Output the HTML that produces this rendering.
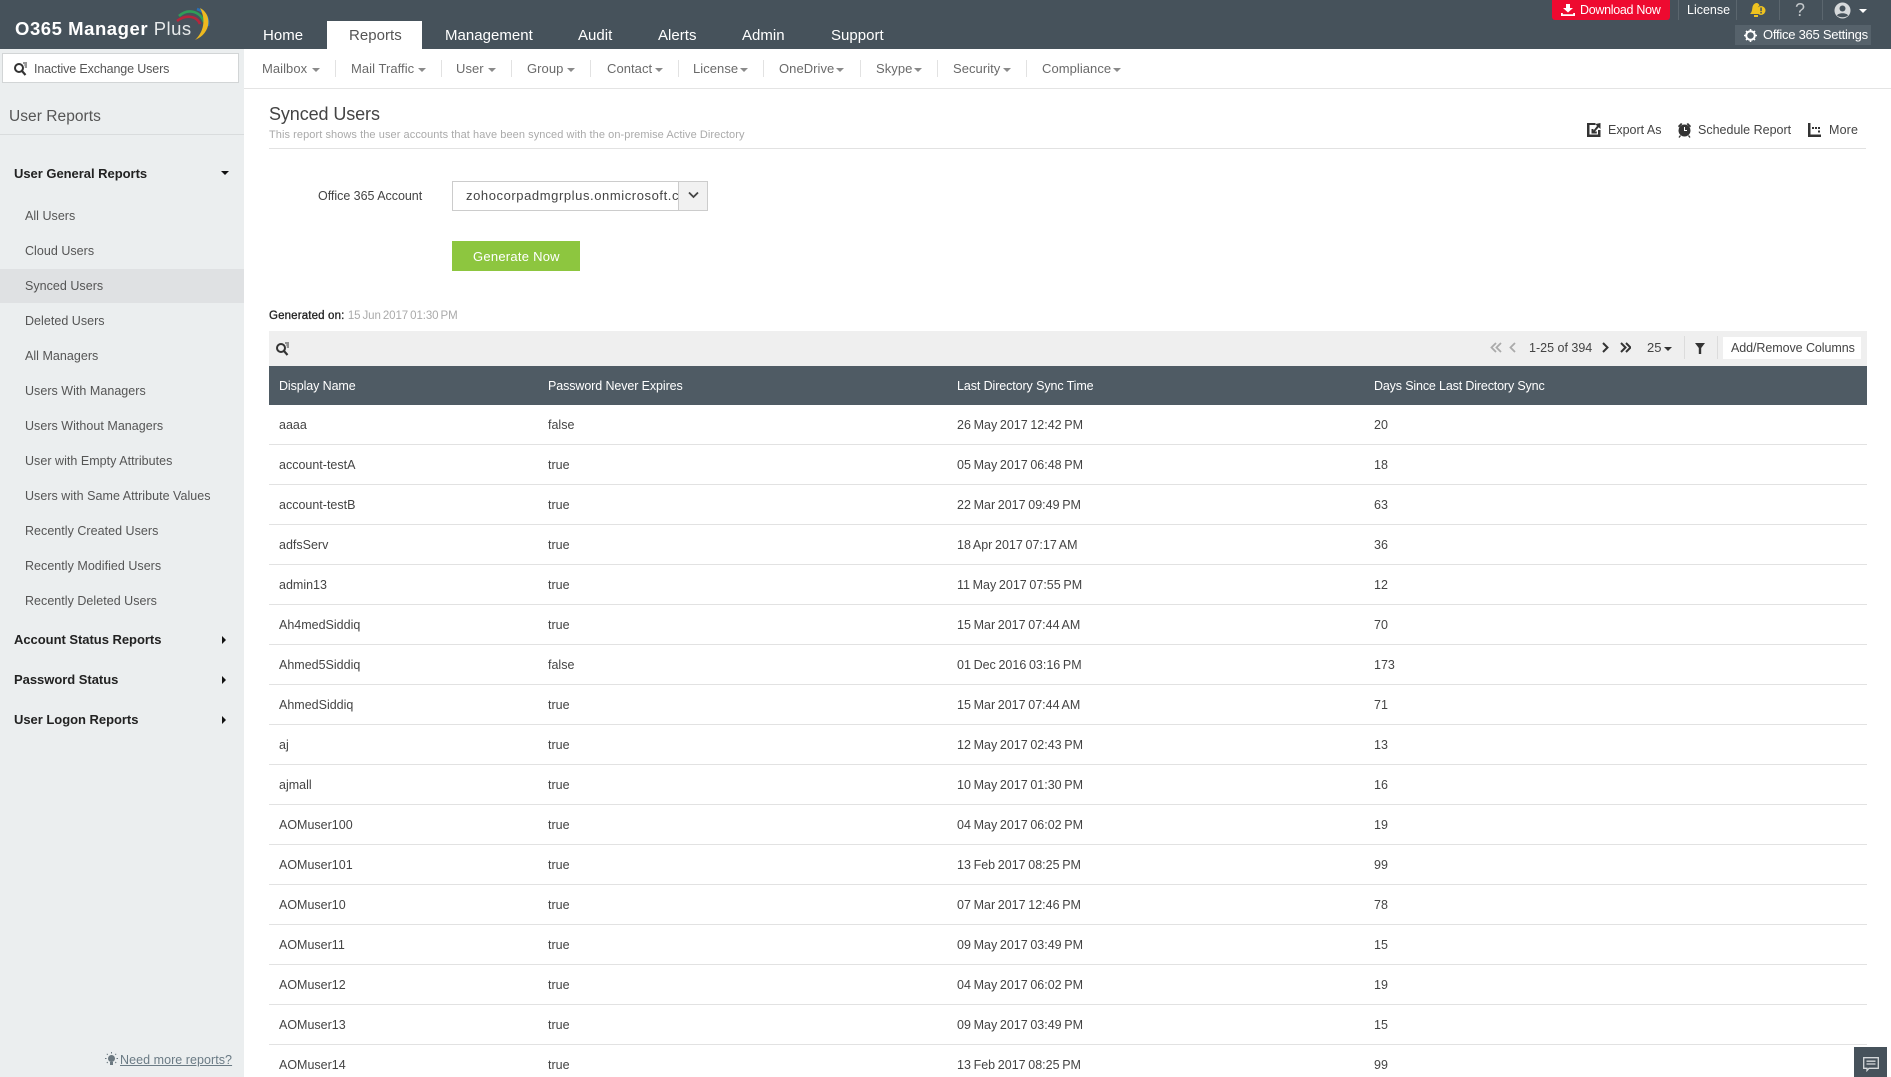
<!DOCTYPE html>
<html><head><meta charset="utf-8"><title>Synced Users</title>
<style>
html,body{margin:0;padding:0;width:1891px;height:1077px;overflow:hidden;background:#fff;font-family:"Liberation Sans",sans-serif;font-size:13px;color:#444}
#w{position:relative;width:1891px;height:1077px;overflow:hidden}
.b{position:absolute}
.t{position:absolute;white-space:nowrap;line-height:20px;height:20px}
.top{font-size:15px;color:#fff;top:26px;letter-spacing:.03px}
.sn{font-size:13px;color:#6a6a6a;top:59px;letter-spacing:.05px}
.sep{position:absolute;top:60px;height:17px;width:1px;background:#e2e2e2}
.car{position:absolute;width:0;height:0;border-left:4px solid transparent;border-right:4px solid transparent;border-top:4px solid #8a8a8a}
.si{font-size:12.5px;color:#555;left:25px;letter-spacing:.03px}
.sh{font-size:13px;font-weight:bold;color:#222;left:14px;letter-spacing:-.03px}
.ar{position:absolute;left:222px;width:0;height:0;border-top:4px solid transparent;border-bottom:4px solid transparent;border-left:4px solid #111}
.hs{position:absolute;top:0;height:20px;width:1px;background:#5b666e}
table{position:absolute;left:269px;top:405px;width:1598px;border-collapse:collapse;table-layout:fixed}
td{height:39px;padding:0 0 0 10px;border-bottom:1px solid #e2e2e2;font-size:12.5px;color:#444;letter-spacing:0;white-space:nowrap}
td:nth-child(3){word-spacing:-.8px}
.th{font-size:12.5px;color:#fff;top:376px;letter-spacing:-.1px}
.grey{color:#aaa;letter-spacing:-.1px;word-spacing:-1px}
</style></head><body><div id="w">

<!-- header -->
<div class="b" style="left:0;top:0;width:1891px;height:49px;background:#46525b"></div>
<div class="t" style="left:15px;top:19px;font-size:18.5px;color:#fff;letter-spacing:.55px;font-weight:bold">O365 Manager <span style="font-weight:normal;color:#e6e9ea;letter-spacing:.45px">Plus</span></div>
<svg class="b" style="left:173px;top:5px" width="42" height="38" viewBox="0 0 42 38" fill="none">
<path d="M24 4C33 7 36 14 35 21" stroke="#2a6fb5" stroke-width="2.6"/>
<path d="M6 11C15 3 27 6 31 17" stroke="#2f9e58" stroke-width="2.6"/>
<path d="M4 16C13 9 24 11 27 19" stroke="#b5263c" stroke-width="2.6"/>
<path d="M27 3C39 9 39 28 22 35C31 27 33 14 27 3Z" fill="#eeb91f"/>
</svg>

<div class="b" style="left:327px;top:21px;width:95px;height:28px;background:#fff"></div>
<div class="t top" style="left:263px">Home</div>
<div class="t top" style="left:349px;color:#555">Reports</div>
<div class="t top" style="left:445px">Management</div>
<div class="t top" style="left:578px">Audit</div>
<div class="t top" style="left:658px">Alerts</div>
<div class="t top" style="left:742px">Admin</div>
<div class="t top" style="left:831px">Support</div>

<!-- top right -->
<div class="b" style="left:1552px;top:0;width:118px;height:20px;background:#ee0a30;border-radius:0 0 3px 3px"></div>
<svg class="b" style="left:1561px;top:4px" width="14" height="12" viewBox="0 0 14 12"><path d="M5 0h4v4h3L7 8.500 2 4h3zM0 9h1.800v1.300h10.400V9H14v3H0z" fill="#fff"/></svg>
<div class="t" style="left:1580px;top:0;font-size:12.500px;color:#fff;letter-spacing:-.3px">Download Now</div>
<div class="hs" style="left:1678px"></div><div class="hs" style="left:1736px"></div><div class="hs" style="left:1779px"></div><div class="hs" style="left:1822px"></div>
<div class="t" style="left:1687px;top:0;font-size:12.500px;color:#fff;letter-spacing:0">License</div>
<svg class="b" style="left:1749px;top:2px" width="17" height="16" viewBox="0 0 17 16"><path d="M1 12C3 10 3 8 3.500 5 4 2.500 6 1 7.500 1S10 2 10.500 3.500C8 5 8 9 10 12z" fill="#eec21f"/><circle cx="12" cy="8.500" r="4.500" fill="#eec21f"/><rect x="11.300" y="5.500" width="1.500" height="3.700" fill="#46525b"/><rect x="11.300" y="10" width="1.500" height="1.500" fill="#46525b"/><rect x="5" y="13" width="4" height="2" fill="#eec21f"/></svg>
<div class="t" style="left:1795px;top:0;font-size:18px;color:#c3c8cb">?</div>
<svg class="b" style="left:1834px;top:2px" width="17" height="17" viewBox="0 0 17 17"><circle cx="8.500" cy="8.500" r="8" fill="#d6d9db"/><circle cx="8.500" cy="6.500" r="3" fill="#46525b"/><path d="M3 13.500C4 10.500 13 10.500 14 13.500 12 15.800 5 15.800 3 13.500z" fill="#46525b"/></svg>
<div class="car" style="left:1859px;top:9px;border-top-color:#fff"></div>
<div class="b" style="left:1735px;top:25px;width:136px;height:20px;background:#56626b"></div>
<svg class="b" style="left:1744px;top:29px" width="13" height="13" viewBox="0 0 13 13"><circle cx="6.500" cy="6.500" r="4.300" fill="none" stroke="#fff" stroke-width="2"/><path d="M6.500 0v2M6.500 11v2M0 6.500h2M11 6.500h2M2 2l1.300 1.300M9.700 9.700L11 11M11 2L9.700 3.300M3.300 9.700L2 11" stroke="#fff" stroke-width="1.600"/></svg>
<div class="t" style="left:1763px;top:25px;font-size:13px;color:#fff;letter-spacing:-.25px">Office 365 Settings</div>

<!-- sidebar -->
<div class="b" style="left:0;top:49px;width:244px;height:1028px;background:#ebeeef"></div>
<div class="b" style="left:2px;top:53px;width:235px;height:28px;background:#fff;border:1px solid #d2d5d6"></div>
<svg class="b" style="left:13px;top:61px" width="16" height="16" viewBox="0 0 16 16" fill="none"><circle cx="6" cy="7" r="4" stroke="#333" stroke-width="2"/><path d="M9 10l3.500 4" stroke="#333" stroke-width="2.200"/><path d="M10 2h4M11.300 4h2.700M11.800 6h2.200" stroke="#333" stroke-width=".9"/></svg>
<div class="t" style="left:34px;top:59px;font-size:12.500px;color:#555;letter-spacing:-.13px">Inactive Exchange Users</div>
<div class="t" style="left:9px;top:107px;font-size:15.500px;color:#555;letter-spacing:.05px">User Reports</div>
<div class="b" style="left:0;top:134px;width:244px;height:1px;background:#d9dcdd"></div>
<div class="t sh" style="top:164px">User General Reports</div>
<div class="car" style="left:221px;top:171px;border-top-color:#111"></div>
<div class="b" style="left:0;top:269px;width:244px;height:34px;background:#dfe1e3"></div>
<div class="t si" style="top:206px">All Users</div>
<div class="t si" style="top:241px">Cloud Users</div>
<div class="t si" style="top:276px">Synced Users</div>
<div class="t si" style="top:311px">Deleted Users</div>
<div class="t si" style="top:346px">All Managers</div>
<div class="t si" style="top:381px">Users With Managers</div>
<div class="t si" style="top:416px">Users Without Managers</div>
<div class="t si" style="top:451px">User with Empty Attributes</div>
<div class="t si" style="top:486px">Users with Same Attribute Values</div>
<div class="t si" style="top:521px">Recently Created Users</div>
<div class="t si" style="top:556px">Recently Modified Users</div>
<div class="t si" style="top:591px">Recently Deleted Users</div>
<div class="t sh" style="top:630px">Account Status Reports</div><div class="ar" style="top:636px"></div>
<div class="t sh" style="top:670px">Password Status</div><div class="ar" style="top:676px"></div>
<div class="t sh" style="top:710px">User Logon Reports</div><div class="ar" style="top:716px"></div>
<svg class="b" style="left:104px;top:1052px" width="15" height="15" viewBox="0 0 15 15"><circle cx="7.500" cy="6.500" r="3.500" fill="#6b7880"/><rect x="6" y="10" width="3" height="3" fill="#6b7880"/><path d="M7.500 0v1.500M1 6.500h1.500M12.500 6.500H14M2.800 1.800l1 1M12.200 1.800l-1 1M2.800 11l1-1M12.200 11l-1-1" stroke="#6b7880" stroke-width="1"/></svg>
<div class="t" style="left:120px;top:1050px;font-size:12.500px;color:#6b7b85;text-decoration:underline;letter-spacing:.05px">Need more reports?</div>

<!-- subnav -->
<div class="b" style="left:244px;top:88px;width:1647px;height:1px;background:#e4e4e4"></div>
<div class="t sn" style="left:262px">Mailbox</div><div class="car" style="left:312px;top:68px"></div><div class="sep" style="left:335px"></div>
<div class="t sn" style="left:351px">Mail Traffic</div><div class="car" style="left:418px;top:68px"></div><div class="sep" style="left:441px"></div>
<div class="t sn" style="left:456px">User</div><div class="car" style="left:488px;top:68px"></div><div class="sep" style="left:511px"></div>
<div class="t sn" style="left:527px">Group</div><div class="car" style="left:567px;top:68px"></div><div class="sep" style="left:590px"></div>
<div class="t sn" style="left:607px">Contact</div><div class="car" style="left:655px;top:68px"></div><div class="sep" style="left:678px"></div>
<div class="t sn" style="left:693px">License</div><div class="car" style="left:740px;top:68px"></div><div class="sep" style="left:763px"></div>
<div class="t sn" style="left:779px">OneDrive</div><div class="car" style="left:836px;top:68px"></div><div class="sep" style="left:860px"></div>
<div class="t sn" style="left:876px">Skype</div><div class="car" style="left:914px;top:68px"></div><div class="sep" style="left:937px"></div>
<div class="t sn" style="left:953px">Security</div><div class="car" style="left:1003px;top:68px"></div><div class="sep" style="left:1026px"></div>
<div class="t sn" style="left:1042px">Compliance</div><div class="car" style="left:1113px;top:68px"></div>

<!-- title -->
<div class="t" style="left:269px;top:104px;font-size:18px;color:#444;letter-spacing:-.1px">Synced Users</div>
<div class="t" style="left:269px;top:125px;font-size:11px;color:#aaa;letter-spacing:.07px">This report shows the user accounts that have been synced with the on-premise Active Directory</div>
<div class="b" style="left:269px;top:148px;width:1597px;height:1px;background:#e2e2e2"></div>
<svg class="b" style="left:1587px;top:123px" width="14" height="14" viewBox="0 0 14 14"><path d="M0 0h8.500v2H2.500v9.500H11V7h2.500v7H0z" fill="#333"/><path d="M13.500 0v6l-1.800-1.800L8 8.500h1.800V10.500H4.500V6H6.500v1.500L10 3 8.500 1z" fill="#333"/></svg>
<div class="t" style="left:1608px;top:120px;font-size:12.500px;color:#444;letter-spacing:0">Export As</div>
<svg class="b" style="left:1677px;top:122px" width="15" height="16" viewBox="0 0 15 16"><circle cx="7.500" cy="8.500" r="6" fill="#333"/><path d="M1 4l3-3 1.500 1-3.500 3.500zM14 4l-3-3-1.500 1 3.500 3.500z" fill="#333"/><path d="M7.500 5v3.500h2.500" stroke="#fff" stroke-width="1" fill="none"/><path d="M3.500 13.500L2 15.500M11.500 13.500L13 15.500" stroke="#333" stroke-width="1.300"/></svg>
<div class="t" style="left:1698px;top:120px;font-size:12.500px;color:#444;letter-spacing:0">Schedule Report</div>
<svg class="b" style="left:1808px;top:123px" width="13" height="14" viewBox="0 0 13 14" fill="#333"><path d="M0 0h2.500v11.500H13V14H0z"/><rect x="4" y="4" width="2" height="2"/><rect x="7" y="4" width="2" height="2"/><rect x="10" y="4" width="2" height="2"/><rect x="10" y="7.500" width="2" height="2"/></svg>
<div class="t" style="left:1829px;top:120px;font-size:12.500px;color:#444;letter-spacing:.15px">More</div>

<!-- form -->
<div class="t" style="left:318px;top:186px;font-size:12.500px;color:#444;letter-spacing:-.03px">Office 365 Account</div>
<div class="b" style="left:452px;top:181px;width:254px;height:28px;background:#fff;border:1px solid #ccc;overflow:hidden">
  <div class="t" style="left:13px;top:4px;font-size:13px;color:#444;letter-spacing:.58px">zohocorpadmgrplus.onmicrosoft.com</div>
  <div class="b" style="left:225px;top:0;width:29px;height:28px;background:#f1f1f1;border-left:1px solid #ccc"></div>
</div>
<svg class="b" style="left:688px;top:191px" width="11" height="8" viewBox="0 0 11 8"><path d="M1 1.500L5.500 6 10 1.500" fill="none" stroke="#444" stroke-width="1.800"/></svg>
<div class="b" style="left:452px;top:241px;width:128px;height:30px;background:#8dc63f"></div>
<div class="t" style="left:473px;top:247px;font-size:13px;color:#fff;letter-spacing:.25px">Generate Now</div>
<div class="t" style="left:269px;top:306px;font-size:11.500px;color:#222;letter-spacing:.15px"><b style="font-weight:normal;-webkit-text-stroke:.3px #222">Generated on:</b> <span class="grey">15 Jun 2017 01:30 PM</span></div>

<!-- toolbar -->
<div class="b" style="left:269px;top:331px;width:1598px;height:35px;background:#efefef"></div>
<svg class="b" style="left:275px;top:341px" width="16" height="16" viewBox="0 0 16 16" fill="none"><circle cx="6" cy="7" r="4" stroke="#333" stroke-width="2"/><path d="M9 10l3.500 4" stroke="#333" stroke-width="2.200"/><path d="M10 2h4M11.300 4h2.700M11.800 6h2.200" stroke="#333" stroke-width=".9"/></svg>
<svg class="b" style="left:1490px;top:341px" width="27" height="13" viewBox="0 0 27 13" fill="none" stroke="#aaa" stroke-width="1.800"><path d="M6 2L1.500 6.500 6 11M11 2L6.500 6.500 11 11M25 2L20.500 6.500 25 11"/></svg>
<div class="t" style="left:1529px;top:338px;font-size:12.500px;color:#444;letter-spacing:0">1-25 of 394</div>
<svg class="b" style="left:1601px;top:341px" width="30" height="13" viewBox="0 0 30 13" fill="none" stroke="#333" stroke-width="2"><path d="M2 2l4.500 4.500L2 11M20 2l4.500 4.500L20 11M25 2l4.500 4.500L25 11"/></svg>
<div class="t" style="left:1647px;top:338px;font-size:13px;color:#444">25</div>
<div class="car" style="left:1664px;top:347px;border-top-color:#333"></div>
<div class="b" style="left:1684px;top:336px;width:1px;height:23px;background:#dcdcdc"></div>
<svg class="b" style="left:1695px;top:343px" width="10" height="11" viewBox="0 0 10 11"><path d="M0 0h10L6.200 5v6H3.800V5z" fill="#333"/></svg>
<div class="b" style="left:1717px;top:336px;width:1px;height:23px;background:#dcdcdc"></div>
<div class="b" style="left:1723px;top:337px;width:138px;height:22px;background:#fff"></div>
<div class="t" style="left:1731px;top:338px;font-size:12.500px;color:#444;letter-spacing:-.07px">Add/Remove Columns</div>

<!-- table head -->
<div class="b" style="left:269px;top:366px;width:1598px;height:39px;background:#4f5b64"></div>
<div class="t th" style="left:279px">Display Name</div>
<div class="t th" style="left:548px">Password Never Expires</div>
<div class="t th" style="left:957px">Last Directory Sync Time</div>
<div class="t th" style="left:1374px;letter-spacing:-.15px">Days Since Last Directory Sync</div>

<table><colgroup><col style="width:269px"><col style="width:409px"><col style="width:417px"><col></colgroup>
<tr><td>aaaa</td><td>false</td><td>26 May 2017 12:42 PM</td><td>20</td></tr>
<tr><td>account-testA</td><td>true</td><td>05 May 2017 06:48 PM</td><td>18</td></tr>
<tr><td>account-testB</td><td>true</td><td>22 Mar 2017 09:49 PM</td><td>63</td></tr>
<tr><td>adfsServ</td><td>true</td><td>18 Apr 2017 07:17 AM</td><td>36</td></tr>
<tr><td>admin13</td><td>true</td><td>11 May 2017 07:55 PM</td><td>12</td></tr>
<tr><td>Ah4medSiddiq</td><td>true</td><td>15 Mar 2017 07:44 AM</td><td>70</td></tr>
<tr><td>Ahmed5Siddiq</td><td>false</td><td>01 Dec 2016 03:16 PM</td><td>173</td></tr>
<tr><td>AhmedSiddiq</td><td>true</td><td>15 Mar 2017 07:44 AM</td><td>71</td></tr>
<tr><td>aj</td><td>true</td><td>12 May 2017 02:43 PM</td><td>13</td></tr>
<tr><td>ajmall</td><td>true</td><td>10 May 2017 01:30 PM</td><td>16</td></tr>
<tr><td>AOMuser100</td><td>true</td><td>04 May 2017 06:02 PM</td><td>19</td></tr>
<tr><td>AOMuser101</td><td>true</td><td>13 Feb 2017 08:25 PM</td><td>99</td></tr>
<tr><td>AOMuser10</td><td>true</td><td>07 Mar 2017 12:46 PM</td><td>78</td></tr>
<tr><td>AOMuser11</td><td>true</td><td>09 May 2017 03:49 PM</td><td>15</td></tr>
<tr><td>AOMuser12</td><td>true</td><td>04 May 2017 06:02 PM</td><td>19</td></tr>
<tr><td>AOMuser13</td><td>true</td><td>09 May 2017 03:49 PM</td><td>15</td></tr>
<tr><td>AOMuser14</td><td>true</td><td>13 Feb 2017 08:25 PM</td><td>99</td></tr>
</table>

<!-- chat -->
<div class="b" style="left:1854px;top:1047px;width:33px;height:30px;background:#46525b"></div>
<svg class="b" style="left:1863px;top:1057px" width="16" height="15" viewBox="0 0 16 15"><path d="M.7.700h14.600v10.600H6L4 13.500V11.300H.7z" fill="none" stroke="#d5d9db" stroke-width="1.300"/><path d="M3.500 4.200h9M3.500 7h9" stroke="#d5d9db" stroke-width="1.300"/></svg>
</div></body></html>
